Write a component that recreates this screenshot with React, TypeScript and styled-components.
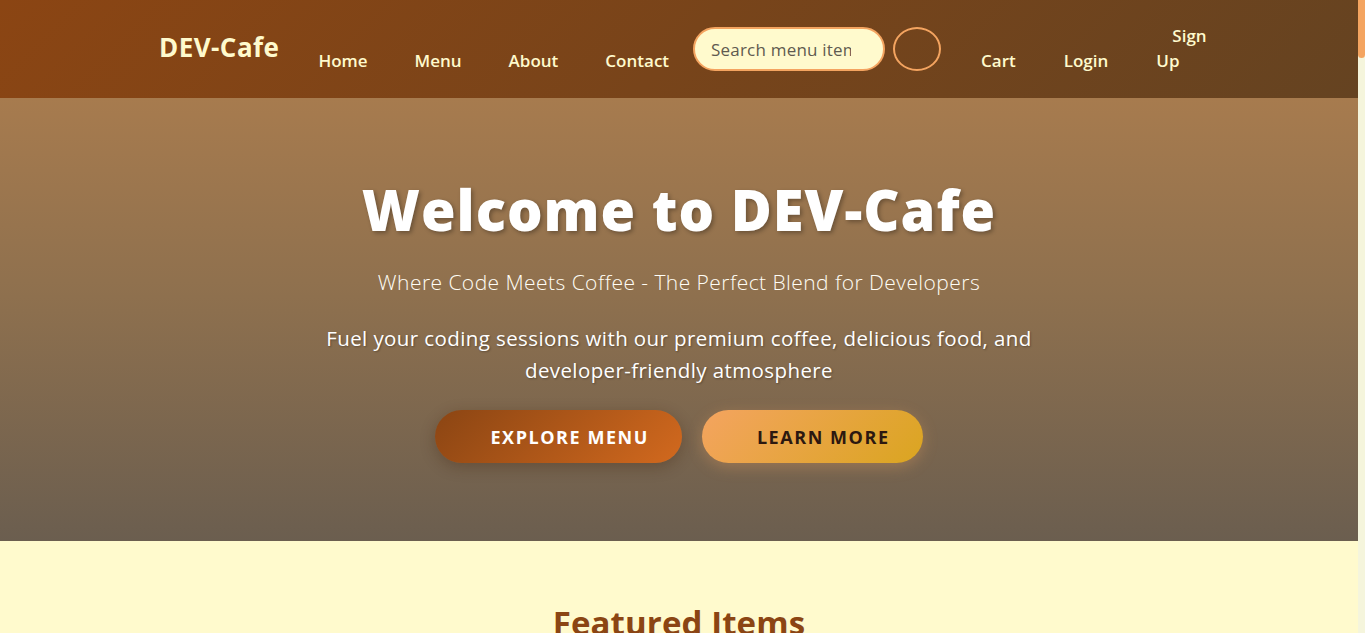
import React from "react";
import styled, { createGlobalStyle } from "styled-components";

const GlobalStyle = createGlobalStyle`
  * { box-sizing: border-box; }
  html, body { margin: 0; padding: 0; }
  html { scrollbar-width: none; }
  ::-webkit-scrollbar { width: 0; height: 0; }
  body {
    font-family: "Open Sans", "Liberation Sans", sans-serif;
    background: #fffacd;
    color: #2c1810;
    margin-right: 7px;
  }
`;

const ScrollRail = styled.div`
  position: fixed;
  top: 0;
  right: 0;
  width: 7px;
  height: 100vh;
  background: #f5f5dc;
  z-index: 10;
`;

const ScrollThumb = styled.div`
  width: 7px;
  height: 58px;
  background: #f4a460;
  border-radius: 0 0 4px 4px;
`;

const Header = styled.header`
  height: 98px;
  display: flex;
  align-items: center;
  padding-left: 159px;
  background: linear-gradient(135deg, #8b4513 0%, #654321 100%);
`;

const Logo = styled.div`
  font-size: 26px;
  font-weight: 700;
  color: #fffacd;
  letter-spacing: 0.45px;
  margin-right: 39px;
  margin-top: -4px;
`;

const NavList = styled.nav`
  display: flex;
  align-items: flex-end;
  padding-bottom: 2px;
`;

const NavLink = styled.a<{ $gap?: number; $width?: number }>`
  display: block;
  color: #fffacd;
  font-size: 17px;
  font-weight: 600;
  line-height: 25px;
  text-decoration: none;
  margin-right: ${(p) => (p.$gap ?? 48)}px;
  ${(p) => (p.$width ? `width: ${p.$width}px;` : "")}
`;

const IconSlot = styled.span`
  display: inline-block;
  width: 16px;
`;

const SearchGroup = styled.div`
  align-self: center;
  display: flex;
  align-items: center;
  gap: 8px;
  margin-right: 40px;
  margin-left: -24px;
  margin-bottom: -2px;
`;

const SearchInput = styled.input`
  width: 192px;
  height: 44px;
  border: 2px solid #f4a460;
  border-radius: 22px;
  background: #fffacd;
  padding: 0 32px 0 16px;
  font-family: "Open Sans", "Liberation Sans", sans-serif;
  font-size: 17px;
  letter-spacing: 0.2px;
  color: #333;
  outline: none;
  &::placeholder { color: #5f5a50; }
`;

const SearchButton = styled.button`
  width: 48px;
  height: 44px;
  border: 2px solid #f4a460;
  border-radius: 50%;
  background: transparent;
  padding: 0;
`;

const Hero = styled.section`
  min-height: 70vh;
  display: flex;
  flex-direction: column;
  align-items: center;
  justify-content: center;
  text-align: center;
  background: linear-gradient(180deg, #a77b4e 0%, #8e704e 45%, #6b5e4f 100%);
  color: #fff;
`;

const Title = styled.h1`
  margin: 0 0 24px;
  font-size: 56px;
  line-height: 67px;
  font-weight: 800;
  letter-spacing: 1px;
  text-shadow: 2px 2px 4px rgba(0, 0, 0, 0.3);
`;

const Subtitle = styled.p`
  margin: 0 0 24px;
  font-size: 21px;
  line-height: 31px;
  font-weight: 300;
  letter-spacing: 0.45px;
  color: #fffdf5;
`;

const Lead = styled.p`
  margin: 0 0 24px;
  font-size: 20.5px;
  line-height: 32px;
  font-weight: 400;
  letter-spacing: 0.4px;
  text-shadow: 1px 1px 2px rgba(0, 0, 0, 0.3);
`;

const Actions = styled.div`
  display: flex;
  gap: 20px;
`;

const HeroButton = styled.a<{ $variant: "primary" | "secondary" }>`
  display: flex;
  align-items: center;
  height: 53px;
  padding: 0 33px 0 35px;
  border-radius: 27px;
  font-size: 18px;
  font-weight: 700;
  letter-spacing: 1.55px;
  text-transform: uppercase;
  text-decoration: none;
  background: ${(p) =>
    p.$variant === "primary"
      ? "linear-gradient(135deg, #8b4513 0%, #d2691e 100%)"
      : "linear-gradient(135deg, #f4a460 0%, #daa520 100%)"};
  color: ${(p) => (p.$variant === "primary" ? "#ffffff" : "#2c1810")};
  box-shadow: ${(p) =>
    p.$variant === "primary"
      ? "0 4px 15px rgba(60, 30, 10, 0.3)"
      : "0 4px 15px rgba(244, 164, 96, 0.3)"};
`;

const ButtonIcon = styled.span`
  display: inline-block;
  width: 20px;
`;

const Section = styled.section<{ $minHeight: number }>`
  min-height: ${(p) => p.$minHeight}px;
  padding: 62px 24px 64px;
  background: #fffacd;
  text-align: center;
`;

const SectionTitle = styled.h2`
  margin: 0;
  font-size: 33px;
  line-height: 40px;
  font-weight: 700;
  letter-spacing: 0.1px;
  color: #8b4513;
`;

export default function App() {
  return (
    <>
      <GlobalStyle />
      <Header>
        <Logo>DEV-Cafe</Logo>
        <NavList>
          <NavLink href="#" $gap={47}>Home</NavLink>
          <NavLink href="#" $gap={47}>Menu</NavLink>
          <NavLink href="#" $gap={47}>About</NavLink>
          <NavLink href="#">Contact</NavLink>
          <SearchGroup>
            <SearchInput placeholder="Search menu items..." />
            <SearchButton aria-label="Search" />
          </SearchGroup>
          <NavLink href="#">Cart</NavLink>
          <NavLink href="#">Login</NavLink>
          <NavLink href="#" $gap={0} $width={56}>
            <IconSlot />Sign Up
          </NavLink>
        </NavList>
      </Header>
      <Hero>
        <Title>Welcome to DEV-Cafe</Title>
        <Subtitle>Where Code Meets Coffee - The Perfect Blend for Developers</Subtitle>
        <Lead>
          Fuel your coding sessions with our premium coffee, delicious food, and
          <br />
          developer-friendly atmosphere
        </Lead>
        <Actions>
          <HeroButton href="#" $variant="primary">
            <ButtonIcon />Explore Menu
          </HeroButton>
          <HeroButton href="#" $variant="secondary">
            <ButtonIcon />Learn More
          </HeroButton>
        </Actions>
      </Hero>
      <Section $minHeight={1400}>
        <SectionTitle>Featured Items</SectionTitle>
      </Section>
      <Section $minHeight={3000}>
        <SectionTitle>Our Menu</SectionTitle>
      </Section>
      <Section $minHeight={900}>
        <SectionTitle>About Us</SectionTitle>
      </Section>
      <Section $minHeight={700}>
        <SectionTitle>Contact</SectionTitle>
      </Section>
      <Section $minHeight={360}>
        <SectionTitle>DEV-Cafe</SectionTitle>
      </Section>
      <ScrollRail>
        <ScrollThumb />
      </ScrollRail>
    </>
  );
}
